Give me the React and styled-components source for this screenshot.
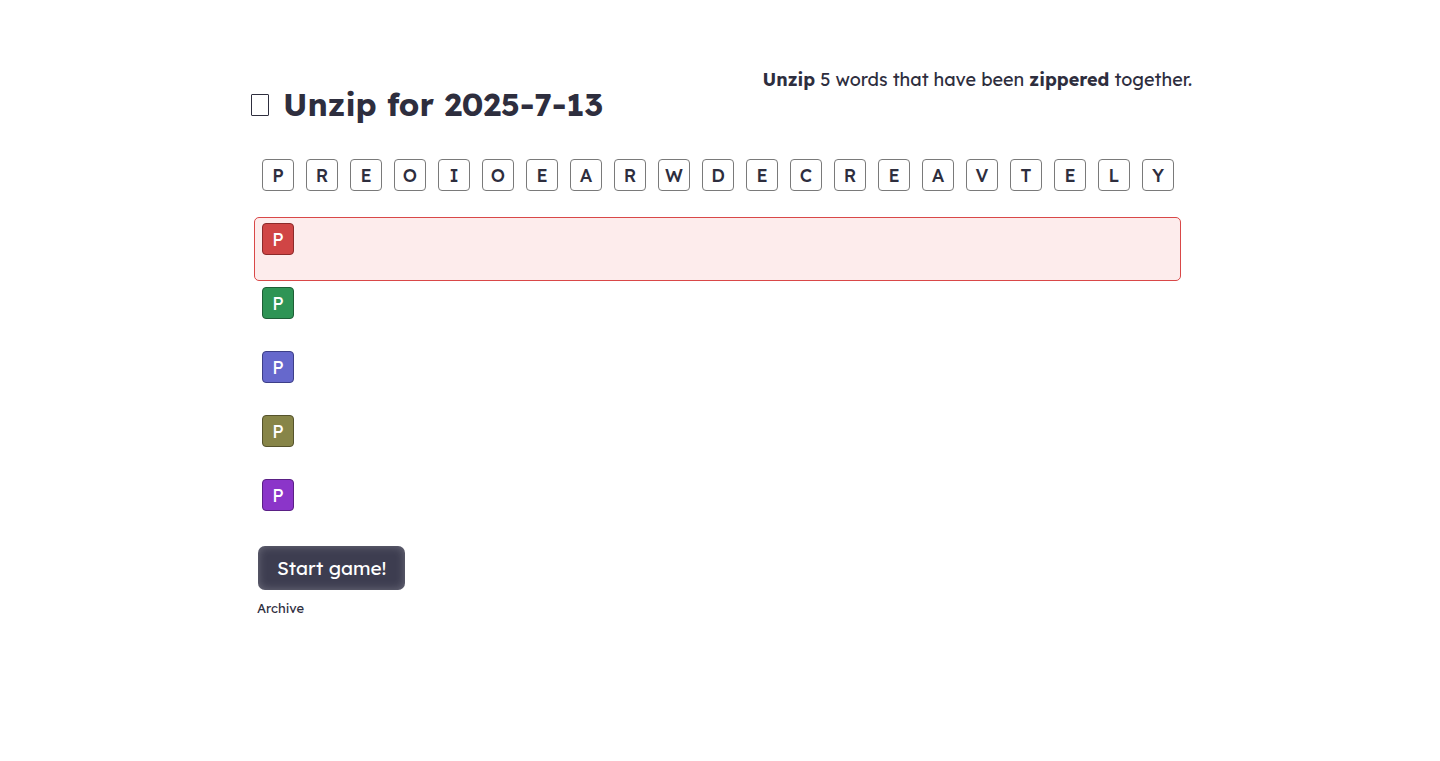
import React from "react";
import styled, { createGlobalStyle } from "styled-components";

const Global = createGlobalStyle`
  html, body { margin: 0; padding: 0; background: #fff; }
  body { font-family: "Lexend", "Inter", "Noto Sans", sans-serif; color: #2e2e3e; }
`;

const Page = styled.div`
  width: 940px;
  margin: 0 auto;
  padding-top: 66px;
`;

const Header = styled.header`
  display: flex;
  justify-content: space-between;
  align-items: flex-start;
`;

const Title = styled.h1`
  margin: 18px 0 0 0;
  font-size: 32px;
  line-height: 40px;
  font-weight: 700;
  color: #2e2e3e;
  display: flex;
  align-items: center;
  gap: 14px;
`;

const Tofu = styled.span`
  box-sizing: border-box;
  display: inline-block;
  width: 18px;
  height: 22px;
  margin-left: 1px;
  margin-top: 2px;
  border: 1.5px solid #2e2e3e;
  border-radius: 1px;
`;

const Blurb = styled.p`
  margin: 1px -2px 0 0;
  font-size: 18px;
  line-height: 26px;
  color: #2e2e3e;
  b { font-weight: 700; }
`;

const Letters = styled.div`
  display: flex;
  gap: 12px;
  padding: 0 12px;
  margin-top: 35px;
`;

const Tile = styled.div`
  box-sizing: border-box;
  width: 32px;
  height: 32px;
  border: 1px solid ${(p) => p.$border || "#7a7a7a"};
  border-radius: 4px;
  background: ${(p) => p.$bg || "#fff"};
  color: ${(p) => (p.$bg ? "#fff" : "#2e2e3e")};
  display: flex;
  align-items: center;
  justify-content: center;
  font-size: 18px;
  font-weight: ${(p) => (p.$bg ? 400 : 500)};
`;

const Rows = styled.div`
  display: flex;
  flex-direction: column;
  margin-top: 26px;
  padding: 0 0 0 4px;
  width: 927px;
`;

const Row = styled.div`
  box-sizing: border-box;
  height: 64px;
  padding: 5px 7px;
  border: 1px solid ${(p) => (p.$active ? "#d94848" : "transparent")};
  border-radius: 5px;
  background: ${(p) => (p.$active ? "#fdecec" : "transparent")};
`;

const Button = styled.button`
  margin: 9px 0 0 8px;
  height: 44px;
  padding: 0 19px;
  border: none;
  border-radius: 7px;
  background: #3d3d50;
  box-shadow: inset 0 0 10px rgba(255, 255, 255, 0.25);
  color: #fff;
  font-family: inherit;
  font-size: 19px;
  font-weight: 400;
  cursor: pointer;
`;

const Archive = styled.a`
  display: block;
  margin: 10px 0 0 7px;
  font-size: 13px;
  font-weight: 400;
  color: #2e2e3e;
  text-decoration: none;
`;

const letters = "PREOIOEARWDECREAVTELY".split("");
const rows = [
  { bg: "#d04545", border: "#8c2a2a", active: true },
  { bg: "#2e9455", border: "#1e5e36" },
  { bg: "#6668cc", border: "#3d3f88" },
  { bg: "#878548", border: "#55532c" },
  { bg: "#8b35c9", border: "#5a2085" },
];

export default function App() {
  return (
    <>
      <Global />
      <Page>
        <Header>
          <Title>
            <Tofu aria-hidden="true" />
            Unzip for 2025-7-13
          </Title>
          <Blurb>
            <b>Unzip</b> 5 words that have been <b>zippered</b> together.
          </Blurb>
        </Header>
        <Letters>
          {letters.map((l, i) => (
            <Tile key={i}>{l}</Tile>
          ))}
        </Letters>
        <Rows>
          {rows.map((r, i) => (
            <Row key={i} $active={r.active}>
              <Tile $bg={r.bg} $border={r.border}>P</Tile>
            </Row>
          ))}
        </Rows>
        <Button>Start game!</Button>
        <Archive href="#">Archive</Archive>
      </Page>
    </>
  );
}
